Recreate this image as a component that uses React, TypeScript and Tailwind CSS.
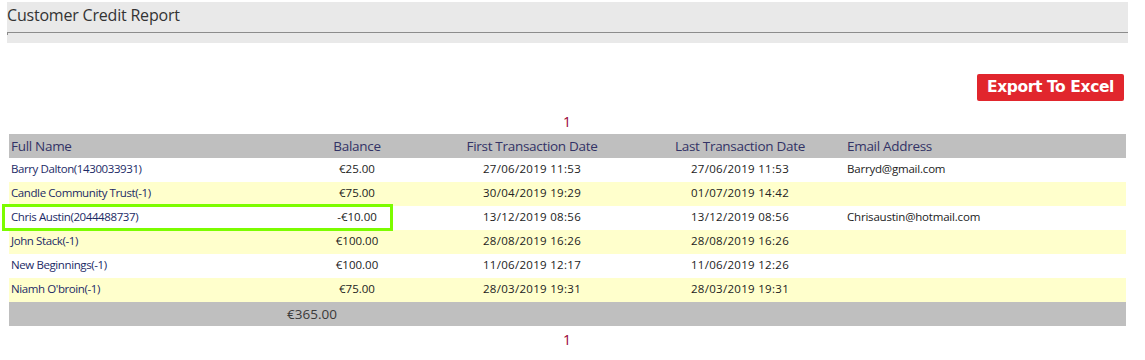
const rows = [
  { name: "Barry Dalton(1430033931)", balance: "€25.00", first: "27/06/2019 11:53", last: "27/06/2019 11:53", email: "Barryd@gmail.com" },
  { name: "Candle Community Trust(-1)", balance: "€75.00", first: "30/04/2019 19:29", last: "01/07/2019 14:42", email: "" },
  { name: "Chris Austin(2044488737)", balance: "-€10.00", first: "13/12/2019 08:56", last: "13/12/2019 08:56", email: "Chrisaustin@hotmail.com" },
  { name: "John Stack(-1)", balance: "€100.00", first: "28/08/2019 16:26", last: "28/08/2019 16:26", email: "" },
  { name: "New Beginnings(-1)", balance: "€100.00", first: "11/06/2019 12:17", last: "11/06/2019 12:26", email: "" },
  { name: "Niamh O'broin(-1)", balance: "€75.00", first: "28/03/2019 19:31", last: "28/03/2019 19:31", email: "" },
];

export default function App() {
  return (
    <div className="relative w-[1145px] h-[360px] bg-white font-['Open_Sans',sans-serif] overflow-hidden">
      {/* page header */}
      <div className="ml-[7px] mt-[2px] w-[1121px] h-[41px] bg-[#e9e9e9] pt-[3px]">
        <div className="text-[16px] leading-[20px] text-[#333] tracking-[-0.2px]">Customer Credit Report</div>
        <div className="mt-[7px] h-[3px] border-t border-l border-[#8c8c8c]" />
      </div>

      <div className="flex justify-end pr-[21px] mt-[31px]">
        <button className="h-[27px] w-[147px] rounded-[2px] bg-[#e1262d] text-white font-['DejaVu_Sans',sans-serif] font-bold text-[15.5px] leading-[27px] tracking-[-0.4px]">
          Export To Excel
        </button>
      </div>

      <div className="text-center text-[#990033] text-[14px] leading-[18px] mt-[12px] pr-[11px]">1</div>

      <table className="ml-[9px] mt-[3px] w-[1117px] table-fixed border-collapse">
        <colgroup>
          <col className="w-[278px]" />
          <col className="w-[140px]" />
          <col className="w-[210px]" />
          <col className="w-[206px]" />
          <col />
        </colgroup>
        <thead>
          <tr className="h-[24px] bg-[#bfbfbf] text-[#333366] text-[13.5px] font-normal">
            <th className="text-left font-normal pl-[2px] tracking-[-0.3px]">Full Name</th>
            <th className="font-normal tracking-[-0.3px]">Balance</th>
            <th className="font-normal tracking-[-0.3px]">First Transaction Date</th>
            <th className="font-normal tracking-[-0.3px]">Last Transaction Date</th>
            <th className="text-left font-normal pl-[4px] tracking-[-0.3px]">Email Address</th>
          </tr>
        </thead>
        <tbody>
          {rows.map((r, i) => (
            <tr key={r.name} className={`h-[24px] text-[11.5px] ${i % 2 === 1 ? "bg-[#ffffcc]" : "bg-white"}`}>
              <td className="pl-[2px] pb-[3px] text-[#1c2a66] tracking-[-0.4px]">{r.name}</td>
              <td className="pb-[3px] text-center text-[#222]">{r.balance}</td>
              <td className="pb-[3px] text-center text-[#222] tracking-[0.3px]">{r.first}</td>
              <td className="pb-[3px] text-center text-[#222] tracking-[0.3px]">{r.last}</td>
              <td className="pl-[4px] pb-[3px] text-[#222] tracking-[-0.2px]">{r.email}</td>
            </tr>
          ))}
        </tbody>
        <tfoot>
          <tr className="h-[24px] bg-[#bfbfbf] text-[13.5px] text-[#3a3a3a]">
            <td />
            <td className="text-left">€365.00</td>
            <td />
            <td />
            <td />
          </tr>
        </tfoot>
      </table>

      <div className="text-center text-[#990033] text-[14px] leading-[18px] mt-[5px] pr-[11px]">1</div>

      {/* highlight annotation */}
      <div className="absolute left-[2px] top-[204px] w-[391px] h-[27px] border-[3px] border-[#7cfc00]" />
    </div>
  );
}
